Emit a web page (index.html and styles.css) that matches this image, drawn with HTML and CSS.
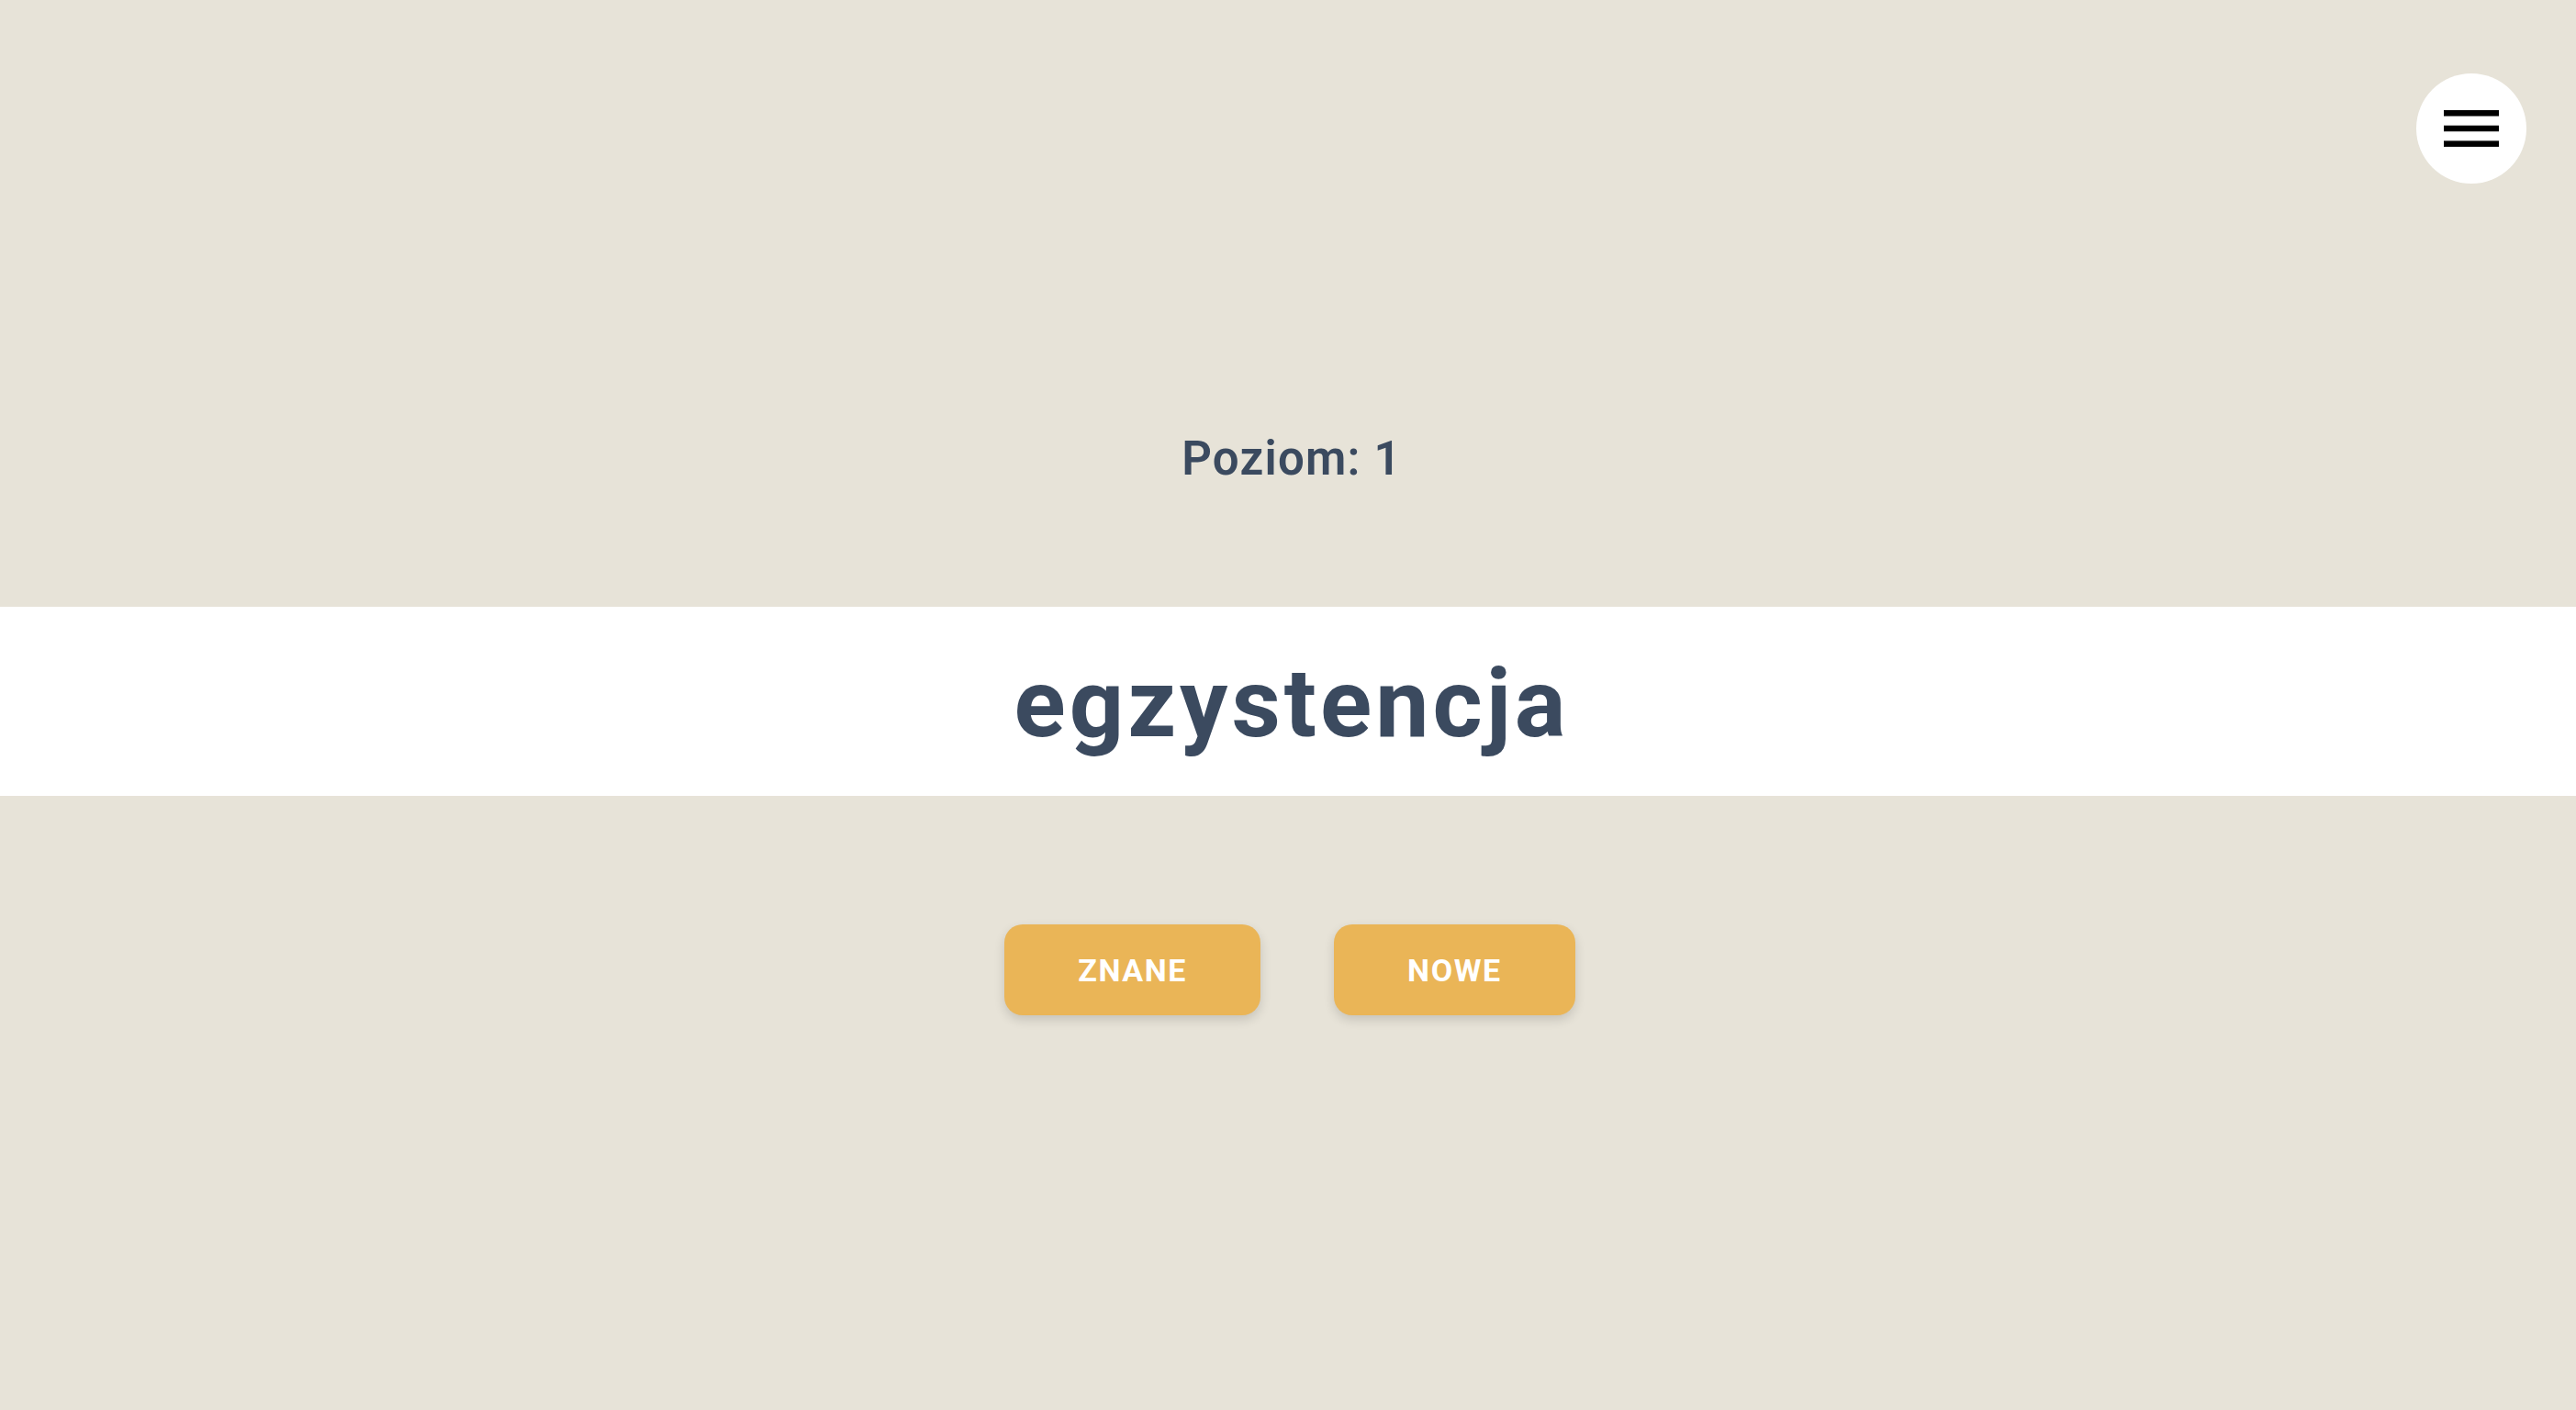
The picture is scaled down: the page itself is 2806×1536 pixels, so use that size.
FILE: index.html
```html
<!DOCTYPE html>
<html lang="pl">
<head>
<meta charset="utf-8">
<title>Poziom</title>
<link rel="stylesheet" href="styles.css">
</head>
<body>
<button class="menu-btn" aria-label="Menu">
  <svg width="60" height="40" viewBox="0 0 60 40">
    <rect x="0" y="0" width="60" height="6.5" fill="#000"/>
    <rect x="0" y="16.7" width="60" height="6.5" fill="#000"/>
    <rect x="0" y="33.4" width="60" height="6.5" fill="#000"/>
  </svg>
</button>
<main class="page">
  <div class="level">Poziom: 1</div>
  <div class="band"><span class="word">egzystencja</span></div>
  <div class="actions">
    <button class="btn">ZNANE</button>
    <button class="btn">NOWE</button>
  </div>
</main>
</body>
</html>
```
FILE: styles.css
```css
html, body {
  margin: 0;
  padding: 0;
}
body {
  background: #e7e3d8;
  height: 1536px;
  overflow: hidden;
  font-family: Roboto, "Liberation Sans", sans-serif;
  color: #3b4a5f;
}
.menu-btn {
  position: absolute;
  top: 80px;
  right: 54px;
  width: 120px;
  height: 120px;
  border-radius: 50%;
  border: none;
  background: #fff;
  display: flex;
  align-items: center;
  justify-content: center;
  padding: 0;
}
.menu-btn svg {
  display: block;
}
.page {
  display: flex;
  flex-direction: column;
  align-items: center;
  padding-top: 470px;
}
.level {
  font-size: 51px;
  font-weight: 600;
  line-height: 60px;
  height: 60px;
  letter-spacing: 1.2px;
  margin-bottom: 131px;
  padding-left: 8px;
}
.band {
  align-self: stretch;
  background: #fff;
  height: 206px;
  display: flex;
  justify-content: center;
  padding-left: 8px;
}
.word {
  font-size: 104px;
  font-weight: 700;
  line-height: 206px;
  padding-top: 3px;
  letter-spacing: 4px;
}
.actions {
  display: flex;
  gap: 80px;
  margin-top: 140px;
  padding-left: 4px;
}
.btn {
  background: #eab557;
  color: #fff;
  border: none;
  border-radius: 20px;
  height: 99px;
  padding: 0 80px;
  font-family: Roboto, "Liberation Sans", sans-serif;
  font-size: 34px;
  font-weight: 700;
  letter-spacing: 1.6px;
  box-shadow: 0 5px 12px rgba(0, 0, 0, 0.14);
}
```
